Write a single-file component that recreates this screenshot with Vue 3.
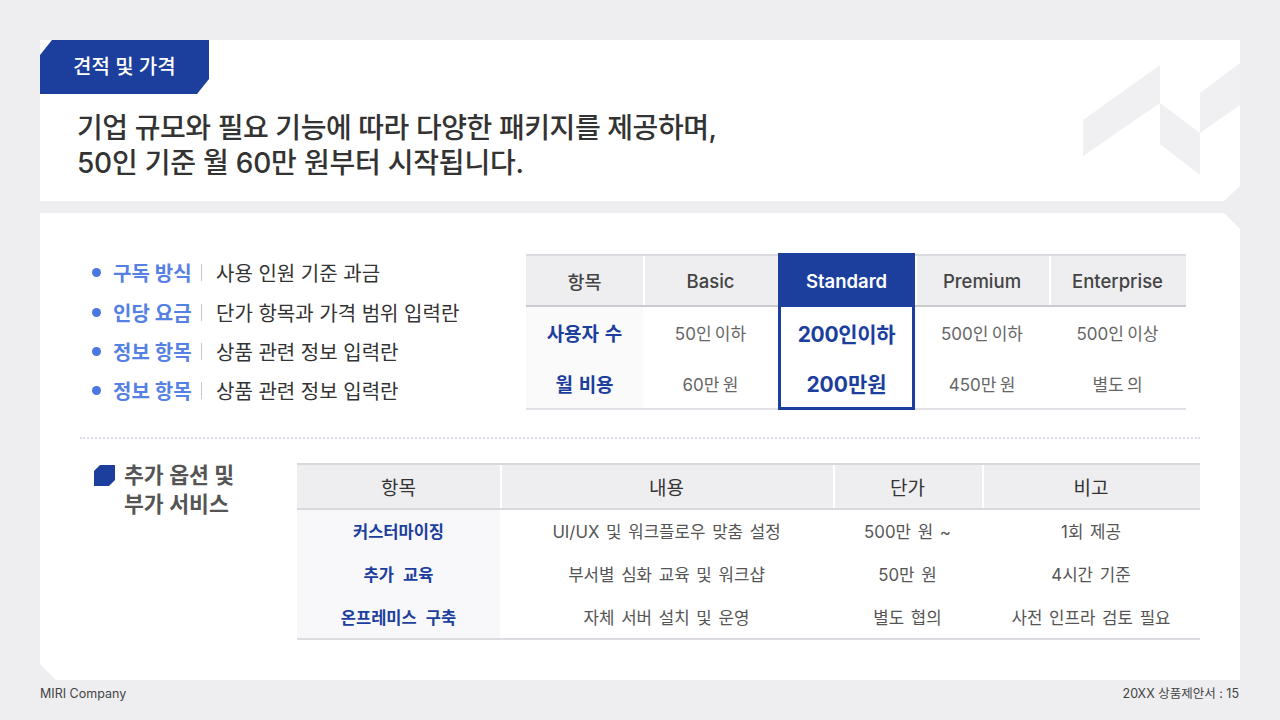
<script setup>
const bullets = [
  ['구독 방식', '사용 인원 기준 과금'],
  ['인당 요금', '단가 항목과 가격 범위 입력란'],
  ['정보 항목', '상품 관련 정보 입력란'],
  ['정보 항목', '상품 관련 정보 입력란'],
]
const planHead = ['항목', 'Basic', 'Standard', 'Premium', 'Enterprise']
const planRows = [
  ['사용자 수', '50인 이하', '200인이하', '500인 이하', '500인 이상'],
  ['월 비용', '60만 원', '200만원', '450만 원', '별도 의'],
]
const optHead = ['항목', '내용', '단가', '비고']
const optRows = [
  ['커스터마이징', 'UI/UX 및 워크플로우 맞춤 설정', '500만 원 ~', '1회 제공'],
  ['추가 교육', '부서별 심화 교육 및 워크샵', '50만 원', '4시간 기준'],
  ['온프레미스 구축', '자체 서버 설치 및 운영', '별도 협의', '사전 인프라 검토 필요'],
]
</script>

<template>
  <div class="slide">
    <header class="top">
      <svg class="mark" viewBox="0 0 157 112" aria-hidden="true">
        <polygon points="0,57 77,2 77,40 0,93" />
        <polygon points="77,40 117,70 117,112 77,81" />
        <polygon points="117,30 157,0 157,42 117,70" />
      </svg>
      <div class="tag">견적 및 가격</div>
      <h1>
        <span class="l1">기업 규모와 필요 기능에 따라 다양한 패키지를 제공하며,</span>
        <span class="l2">50인 기준 월 60만 원부터 시작됩니다.</span>
      </h1>
    </header>

    <main class="body">
      <section class="upper">
        <ul class="bullets">
          <li v-for="(b, i) in bullets" :key="i">
            <span class="dot"></span>
            <b>{{ b[0] }}</b>
            <span class="sep"></span>
            <span class="desc">{{ b[1] }}</span>
          </li>
        </ul>
        <div class="plans">
          <div class="row head">
            <div v-for="(h, i) in planHead" :key="h" class="cell" :class="{ hot: i === 2 }">{{ h }}</div>
          </div>
          <div v-for="(r, ri) in planRows" :key="ri" class="row" :class="'r' + ri">
            <div v-for="(c, i) in r" :key="i" class="cell" :class="{ name: i === 0, pick: i === 2 }">{{ c }}</div>
          </div>
        </div>
      </section>

      <div class="rule"></div>

      <section class="lower">
        <div class="sub">
          <span class="chip"></span>
          <h2>추가 옵션 및<br />부가 서비스</h2>
        </div>
        <div class="opts">
          <div class="orow ohead">
            <div v-for="h in optHead" :key="h" class="ocell">{{ h }}</div>
          </div>
          <div v-for="(r, ri) in optRows" :key="ri" class="orow" :class="'o' + ri">
            <div v-for="(c, i) in r" :key="i" class="ocell" :class="{ oname: i === 0 }">{{ c }}</div>
          </div>
        </div>
      </section>
    </main>

    <footer>
      <span>MIRI Company</span>
      <span>20XX 상품제안서 : 15</span>
    </footer>
  </div>
</template>

<style>
html, body { margin: 0; background: #eeeef0; }
</style>

<style scoped>
.slide {
  width: 1280px;
  height: 720px;
  box-sizing: border-box;
  padding: 40px 40px 0;
  display: flex;
  flex-direction: column;
  background: #eeeef0;
  font-family: Inter, "Noto Sans CJK KR", sans-serif;
  color: #333;
  overflow: hidden;
}
.top {
  position: relative;
  height: 161px;
  background: #fff;
  clip-path: polygon(0 0, 100% 0, 100% 146px, 1184px 100%, 0 100%);
}
.mark {
  position: absolute;
  left: 1043px;
  top: 23px;
  width: 157px;
  height: 112px;
  fill: #f0f0f2;
}
.tag {
  width: 169px;
  height: 54px;
  box-sizing: border-box;
  padding: 0 0 3px 33px;
  display: flex;
  align-items: center;
  background: #1c3f9e;
  color: #fff;
  font-size: 20px;
  font-weight: 500;
  clip-path: polygon(12px 0, 100% 0, 100% 39px, 157px 100%, 0 100%, 0 15px);
}
h1 {
  margin: 17px 0 0 37px;
  font-size: 28px;
  line-height: 35px;
  font-weight: 500;
  color: #333;
}
h1 span { display: block; }
.l1 { letter-spacing: -0.44px; }
.l2 { letter-spacing: -0.22px; }
.body {
  margin-top: 12px;
  height: 467px;
  box-sizing: border-box;
  padding: 40px 40px 0;
  background: #fff;
  clip-path: polygon(0 0, 1184px 0, 100% 16px, 100% 100%, 16px 100%, 0 451px);
}
.upper {
  display: flex;
  height: 158px;
}
.bullets {
  list-style: none;
  margin: 0;
  padding: 0 0 0 12px;
  width: 446px;
  box-sizing: border-box;
  flex: none;
}
.bullets li {
  height: 39.4px;
  display: flex;
  align-items: center;
  font-size: 20px;
}
.dot {
  width: 9px;
  height: 9px;
  border-radius: 50%;
  background: #4a77e0;
  margin-right: 12px;
}
.bullets b {
  width: 79px;
  font-weight: 600;
  color: #5580e4;
  white-space: nowrap;
}
.sep {
  width: 1px;
  height: 17px;
  background: #c8c8cc;
  margin: 0 14px 0 9px;
}
.desc {
  color: #333;
  white-space: nowrap;
}
.plans {
  width: 660px;
  flex: none;
  padding-top: 1px;
  font-size: 17px;
}
.row {
  display: grid;
  grid-template-columns: 117px 135px 137px 134px 137px;
  height: 52px;
}
.head {
  height: 53px;
  border-top: 2px solid #dcdce0;
  border-bottom: 2px solid #c9c9ce;
  box-sizing: border-box;
  position: relative;
  font-size: 18.5px;
}
.r0 { height: 51px; }
.cell {
  display: flex;
  align-items: center;
  justify-content: center;
  color: #666;
  white-space: nowrap;
  word-spacing: -1.5px;
}
.head .cell {
  background: #eeeef0;
  color: #444;
  font-weight: 500;
  border-left: 2px solid #fff;
  padding-right: 2px;
  padding-top: 1px;
}
.head .cell:first-child { border-left: 0; padding-right: 0; }
.head .cell.hot {
  background: #1c3f9e;
  color: #fff;
  border-left: 0;
  padding-right: 0;
  margin: -3px 0 -2px;
  font-weight: 600;
}
.r1 {
  border-bottom: 2px solid #e2e2e6;
  box-sizing: content-box;
  height: 50px;
}
.cell.name {
  background: #fafafb;
  color: #1c3f9e;
  font-size: 19px;
  font-weight: 600;
  word-spacing: 1px;
}
.cell.pick {
  color: #1c3f9e;
  font-size: 21px;
  font-weight: 700;
  border-left: 3px solid #1c3f9e;
  border-right: 3px solid #1c3f9e;
}
.r0 .pick { letter-spacing: -0.3px; }
.r1 .pick {
  border-bottom: 3px solid #1c3f9e;
  margin-bottom: -2px;
}
.rule {
  margin: 26px 0 0;
  border-top: 2px dotted #dedbe6;
}
.lower {
  display: flex;
  margin-top: 24px;
}
.sub {
  width: 217px;
  flex: none;
  display: flex;
  padding-left: 14px;
  box-sizing: border-box;
}
.chip {
  width: 21px;
  height: 21px;
  margin-top: 2px;
  margin-right: 9px;
  flex: none;
  background: #1c3f9e;
  clip-path: polygon(6px 0, 100% 0, 100% 15px, 15px 100%, 0 100%, 0 6px);
}
h2 {
  margin: -2px 0 0;
  font-size: 21.6px;
  line-height: 29px;
  font-weight: 600;
  color: #555;
}
.opts {
  width: 903px;
  flex: none;
  font-size: 16.8px;
}
.orow {
  display: grid;
  grid-template-columns: 203px 333px 149px 218px;
  height: 43px;
}
.ohead {
  height: 47px;
  box-sizing: border-box;
  border-top: 2px solid #d8d8dc;
  border-bottom: 2px solid #d8d8dc;
  font-size: 19px;
}
.ocell {
  display: flex;
  align-items: center;
  justify-content: center;
  color: #555;
  white-space: nowrap;
  word-spacing: 2px;
}
.ohead .ocell {
  background: #eeeef0;
  color: #333;
  border-left: 2px solid #fff;
  padding-right: 2px;
}
.ohead .ocell:first-child { border-left: 0; padding-right: 0; }
.ocell.oname {
  background: #f8f8fa;
  color: #1c3f9e;
  font-weight: 600;
  font-size: 16.5px;
  word-spacing: 5px;
}
.o0 { height: 44px; }
.o0 .ocell { padding-bottom: 2px; }
.o1 { height: 42px; }
.o1 .ocell { padding-bottom: 2px; }
.o2 {
  height: 44px;
  box-sizing: border-box;
  border-bottom: 2px solid #dcdce0;
}
footer {
  flex: 1;
  display: flex;
  justify-content: space-between;
  padding: 6px 1px 0 0;
  font-size: 12.5px;
  line-height: 16px;
  color: #444;
}
</style>
